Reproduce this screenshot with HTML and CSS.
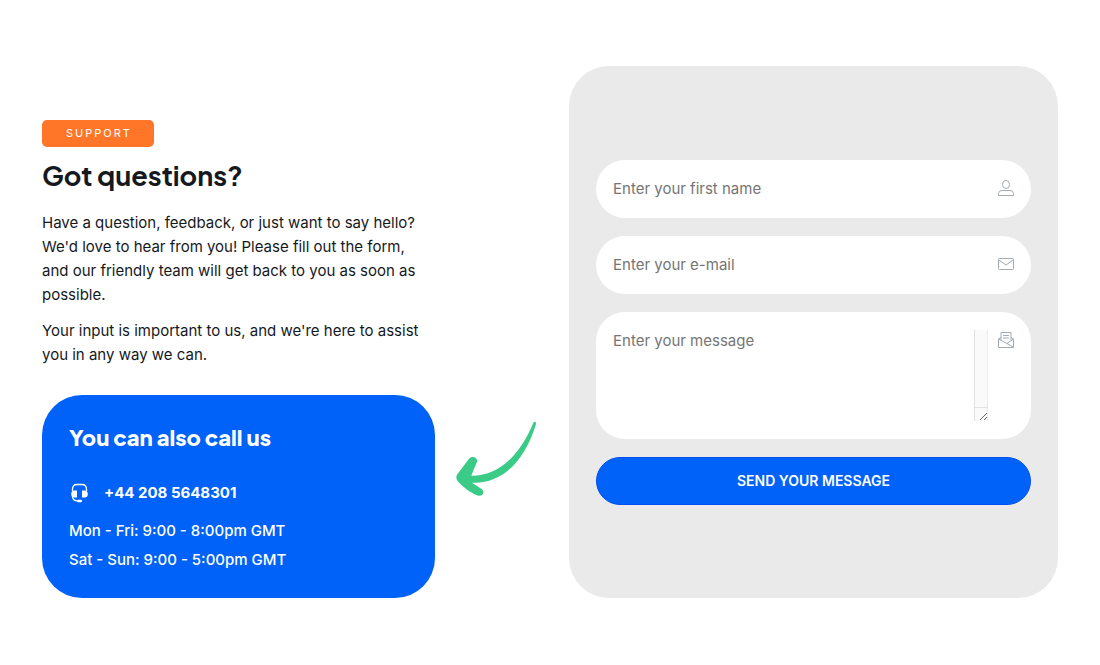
FILE: index.html
```html
<!DOCTYPE html>
<html lang="en">
<head>
<meta charset="utf-8">
<meta name="viewport" content="width=device-width, initial-scale=1">
<title>Got questions?</title>
<link rel="stylesheet" href="styles.css">
</head>
<body>
<main class="support">
  <section class="intro">
    <span class="badge">SUPPORT</span>
    <h1 class="title">Got questions?</h1>
    <p class="text">Have a question, feedback, or just want to say hello? We'd love to hear from you! Please fill out the form, and our friendly team will get back to you as soon as possible.</p>
    <p class="text">Your input is important to us, and we're here to assist you in any way we can.</p>
    <div class="call">
      <h2 class="call-title">You can also call us</h2>
      <a class="phone" href="tel:+442085648301">
        <svg class="phone-icon" viewBox="0 0 20 20" aria-hidden="true">
          <path d="M3.500 8V6.500Q3.500 1.500 8 1.500H13Q17.500 1.500 17.500 6.500V8M3.500 13Q3.500 17.500 8 17.800H9" fill="none" stroke="currentColor" stroke-width="1.300"/>
          <path d="M8 7.500V14.500H5.500Q2.200 14.500 2.200 11Q2.200 7.500 5.500 7.500ZM13 7.500V14.500H15.500Q18.800 14.500 18.800 11Q18.800 7.500 15.500 7.500Z" fill="currentColor"/>
          <rect x="8" y="16.800" width="5" height="2.400" rx="1" fill="currentColor"/>
        </svg>
        <span>+44 208 5648301</span>
      </a>
      <p class="hours">Mon - Fri: 9:00 - 8:00pm GMT</p>
      <p class="hours">Sat - Sun: 9:00 - 5:00pm GMT</p>
    </div>
  </section>
  <svg class="arrow" viewBox="0 0 82 76" aria-hidden="true">
    <path d="M78.500 1.200C79.500 0 81.500 .8 81 3C70 39 48 64 16 62.500C20 65 23 67 25.500 68.500C30 71.500 27 77 22 75.500C15 73 7 67 1.500 60.500C0 58.500 0 56.500 1 54.500L13 38.500C17 34 23 38 21 42C19 46.500 17 51 15.500 55.500C45 56 66 32 78.500 1.200Z" fill="#3acb87"/>
  </svg>
  <form class="panel">
    <div class="field">
      <input class="control" type="text" aria-label="First name" placeholder="Enter your first name">
      <svg class="field-icon" viewBox="0 0 16 16" aria-hidden="true"><ellipse cx="8" cy="4.500" rx="3.500" ry="4"/><path d="M.5 15.500V13.500Q.5 10.500 4 10.500H12Q15.500 10.500 15.500 13.500V15.500Z"/></svg>
    </div>
    <div class="field">
      <input class="control" type="email" aria-label="E-mail" placeholder="Enter your e-mail">
      <svg class="field-icon" viewBox="0 0 16 16" aria-hidden="true"><rect x=".5" y="2.500" width="15" height="11" rx="1"/><path d="M1 4L8 9L15 4"/></svg>
    </div>
    <div class="field">
      <textarea class="control message" aria-label="Message" placeholder="Enter your message"></textarea>
      <svg class="field-icon" viewBox="0 0 16 16" aria-hidden="true"><path d="M3 8V.5H13V8M3 5.500L.5 7V15.500H15.500V7L13 5.500M.5 7L15.500 15M9 11.500L15.500 7M5 3.500H11M5 6H11"/></svg>
    </div>
    <button class="send" type="submit">SEND YOUR MESSAGE</button>
  </form>
</main>
</body>
</html>
```
FILE: styles.css
```css
* { box-sizing: border-box; }

body {
  margin: 0;
  background: #fff;
  color: #15191d;
  font-family: Inter, "Liberation Sans", sans-serif;
}

.support {
  display: grid;
  grid-template-columns: 393fr 134px 489fr;
  align-items: end;
  padding: 66px 42px;
}

.badge {
  display: inline-block;
  padding: 0 22px 0 24px;
  border-radius: 5px;
  background: #ff7629;
  color: #fff;
  font-size: 11px;
  line-height: 27px;
  letter-spacing: 2px;
  vertical-align: top;
}

.title {
  margin: 11px 0 19px;
  font-family: "Plus Jakarta Sans", Inter, sans-serif;
  font-size: 27px;
  line-height: 34px;
  font-weight: 700;
}

.text {
  margin: 0 0 12px;
  font-size: 15px;
  line-height: 24px;
}

.call {
  margin-top: 28px;
  padding: 26px 27px 24px;
  border-radius: 40px;
  background: #0062f8;
  color: #fff;
}

.call-title {
  margin: 0 0 28px;
  font-family: "Plus Jakarta Sans", Inter, sans-serif;
  font-size: 22px;
  line-height: 32px;
  font-weight: 800;
}

.phone {
  display: flex;
  align-items: center;
  gap: 15px;
  margin-bottom: 11px;
  color: inherit;
  font-size: 15px;
  line-height: 24px;
  font-weight: 700;
  text-decoration: none;
}

.phone-icon {
  width: 20px;
  height: 20px;
}

.hours {
  margin: 0;
  font-size: 15px;
  line-height: 29px;
  font-weight: 500;
}

.arrow {
  width: 81px;
  margin: 0 0 102px 21px;
}

.panel {
  display: flex;
  flex-direction: column;
  gap: 18px;
  padding: 94px 27px 93px;
  border-radius: 40px;
  background: #eaeaea;
}

.field {
  display: flex;
  align-items: flex-start;
  gap: 10px;
  padding: 18px 17px;
  border-radius: 29px;
  background: #fff;
}

.control {
  flex: 1;
  min-width: 0;
  height: 22px;
  margin: 0;
  padding: 0;
  border: 0;
  outline: 0;
  background: transparent;
  color: #15191d;
  font-family: inherit;
  font-size: 15px;
  line-height: 22px;
}

.control::placeholder {
  color: #757575;
  opacity: 1;
}

.message {
  height: 91px;
  padding-right: 14px;
  overflow-y: scroll;
  resize: vertical;
  background:
    linear-gradient(#e2e2e2, #e2e2e2) right 0 bottom 13px / 14px 1px no-repeat,
    linear-gradient(to right, #e2e2e2 1px, #fafafa 1px 13px, #ececec 13px) right / 14px 100% no-repeat;
}

.field-icon {
  width: 16px;
  height: 16px;
  margin-top: 2px;
  fill: none;
  stroke: #a2abb3;
  stroke-width: 1;
  stroke-linejoin: round;
}

.send {
  height: 48px;
  padding: 0 24px 2px;
  border: 1px solid #0050f0;
  border-radius: 24px;
  background: #0062f8;
  color: #fff;
  font-family: inherit;
  font-size: 14px;
  font-weight: 600;
}
```
